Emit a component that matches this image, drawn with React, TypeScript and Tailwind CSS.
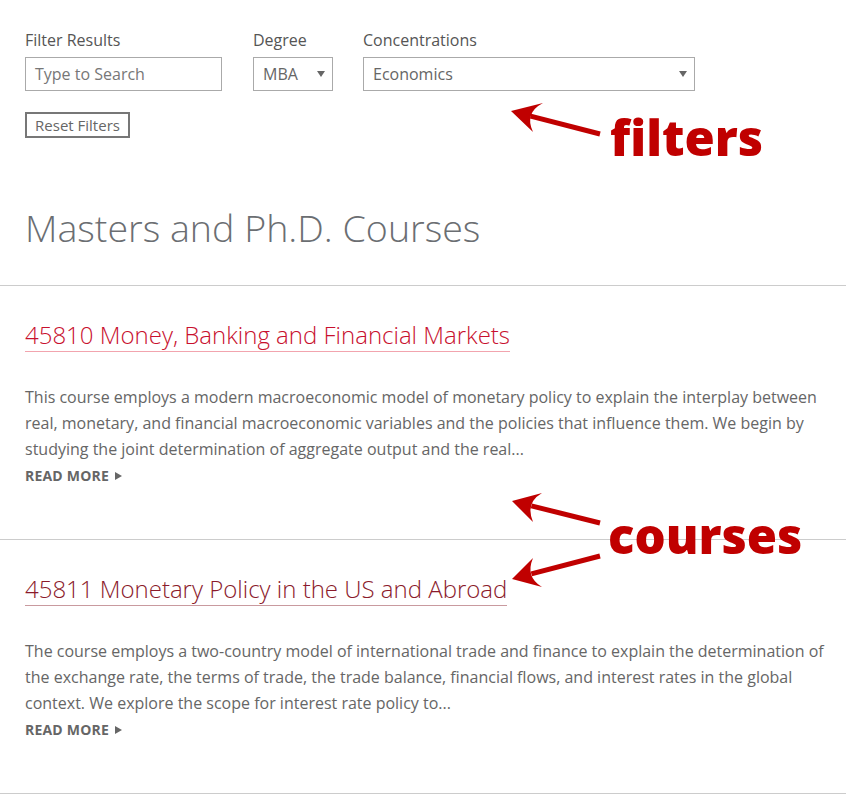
import React from "react";

function Caret() {
  return (
    <svg width="8" height="6" viewBox="0 0 8 6" className="shrink-0">
      <path d="M0 0 L8 0 L4 6 Z" fill="#666" />
    </svg>
  );
}

function Course({ title, visited, text }: { title: string; visited?: boolean; text: string }) {
  return (
    <div className="border-t border-[#cccccc] pl-[25px] pr-[15px] pt-[32px] pb-[53px]">
      <a
        className={
          "inline-block text-[24px] font-light leading-[33px] border-b " +
          (visited ? "text-[#8b1a2b] border-[#c99a9f]" : "text-[#c8102e] border-[#f2a4ae]")
        }
      >
        {title}
      </a>
      <p className="mt-[32px] text-[16px] leading-[26px] text-[#666666]">{text}</p>
      <div className="mt-[4px] flex items-center gap-[6px] text-[14px] font-bold leading-[20px] text-[#666666] tracking-[0.2px]">
        READ MORE
        <svg width="7" height="8" viewBox="0 0 7 8">
          <path d="M0 0 L7 4 L0 8 Z" fill="#666" />
        </svg>
      </div>
    </div>
  );
}

function Arrow({ tip, w1, w2, ctrl, end }: { tip: [number, number]; w1: [number, number]; w2: [number, number]; ctrl: [number, number]; end: [number, number] }) {
  const notch: [number, number] = [tip[0] + (end[0] - tip[0]) * 0.22, tip[1] + (end[1] - tip[1]) * 0.22];
  return (
    <g fill="#c00000" stroke="none">
      <line x1={notch[0]} y1={notch[1]} x2={end[0]} y2={end[1]} stroke="#c00000" strokeWidth="5" />
      <path d={`M${tip[0]} ${tip[1]} L${w1[0]} ${w1[1]} Q${ctrl[0]} ${ctrl[1]} ${w2[0]} ${w2[1]} Z`} />
    </g>
  );
}

export default function App() {
  return (
    <div className="relative w-[846px] min-h-[806px] bg-white font-['Open_Sans',sans-serif] overflow-hidden">
      <div className="px-[25px] pt-[29px]">
        <div className="flex">
          <div className="flex flex-col">
            <label className="text-[16px] leading-[22px] text-[#555555] mb-[6px]">Filter Results</label>
            <div className="w-[197px] h-[34px] border border-[#aaaaaa] flex items-center px-[9px] text-[16px] text-[#777777]">
              Type to Search
            </div>
          </div>
          <div className="flex flex-col ml-[31px]">
            <label className="text-[16px] leading-[22px] text-[#555555] mb-[6px]">Degree</label>
            <div className="w-[80px] h-[34px] border border-[#aaaaaa] flex items-center justify-between pl-[9px] pr-[7px] text-[16px] text-[#666666]">
              MBA
              <Caret />
            </div>
          </div>
          <div className="flex flex-col ml-[30px]">
            <label className="text-[16px] leading-[22px] text-[#555555] mb-[6px]">Concentrations</label>
            <div className="w-[332px] h-[34px] border border-[#aaaaaa] flex items-center justify-between pl-[9px] pr-[7px] text-[16px] text-[#666666]">
              Economics
              <Caret />
            </div>
          </div>
        </div>
        <button className="mt-[21px] h-[26px] w-[105px] border-2 border-[#777777] text-[15px] text-[#666666] leading-none flex items-center justify-center">
          Reset Filters
        </button>
        <h1 className="mt-[66px] text-[37.6px] font-light leading-[48px] text-[#6b6e72] pb-[33px]">
          Masters and Ph.D. Courses
        </h1>
      </div>

      <Course
        title="45810 Money, Banking and Financial Markets"
        text="This course employs a modern macroeconomic model of monetary policy to explain the interplay between real, monetary, and financial macroeconomic variables and the policies that influence them. We begin by studying the joint determination of aggregate output and the real..."
      />
      <Course
        visited
        title="45811 Monetary Policy in the US and Abroad"
        text="The course employs a two-country model of international trade and finance to explain the determination of the exchange rate, the terms of trade, the trade balance, financial flows, and interest rates in the global context. We explore the scope for interest rate policy to..."
      />
      <div className="border-t border-[#cccccc]" />

      <svg className="absolute inset-0 pointer-events-none" width="846" height="806">
        <Arrow tip={[511, 111]} w1={[543, 103]} w2={[533, 132]} ctrl={[524, 113]} end={[600, 134]} />
        <Arrow tip={[512, 501]} w1={[542, 493]} w2={[533, 522]} ctrl={[525, 503]} end={[600, 523]} />
        <Arrow tip={[512, 579]} w1={[533, 558]} w2={[542, 587]} ctrl={[525, 577]} end={[600, 556]} />
      </svg>
      <div className="absolute left-[610px] top-[102px] text-[49px] font-extrabold leading-[70px] text-[#c00000] pointer-events-none">
        filters
      </div>
      <div className="absolute left-[608px] top-[500px] text-[49px] font-extrabold leading-[70px] text-[#c00000] pointer-events-none">
        courses
      </div>
    </div>
  );
}
